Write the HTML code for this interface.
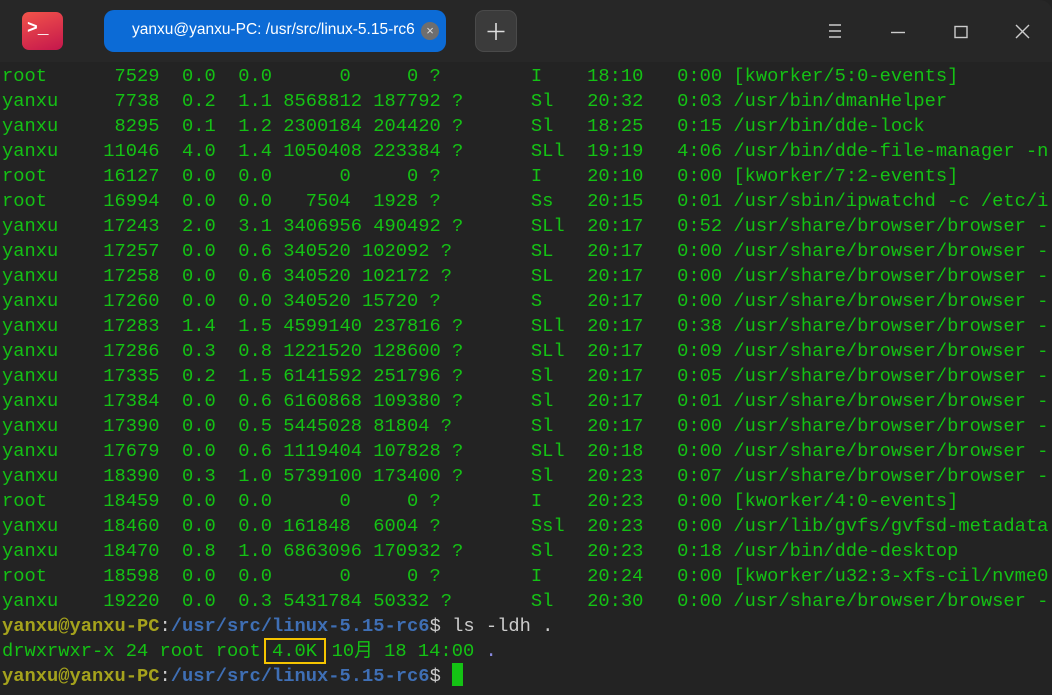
<!DOCTYPE html>
<html><head><meta charset="utf-8"><style>
html,body{margin:0;padding:0;background:#232323;}
body{width:1052px;height:695px;position:relative;overflow:hidden;font-family:"Liberation Mono","Noto Sans CJK SC",monospace;}
#tb{position:absolute;left:0;top:0;width:1052px;height:62px;background:#272727;border-radius:0 12px 0 0;}
#term{position:absolute;left:2px;top:64px;width:1050px;height:631px;font-size:18.75px;color:#14c214;}
.r{position:absolute;left:0;height:25px;line-height:25px;width:1050px;white-space:pre;}
.r span{position:absolute;top:0;white-space:pre;}
.u{color:#a5a31c;font-weight:bold}.p{color:#3f6fb5;font-weight:bold}
</style></head><body>
<div id="tb">
 <div style="position:absolute;left:22px;top:12px;width:41px;height:38px;border-radius:7px;background:linear-gradient(160deg,#f2544a,#c4164c);"></div>
 <div style="position:absolute;left:27px;top:19px;color:#fff;font:bold 18px 'Liberation Mono',monospace;">&gt;_</div>
 <div style="position:absolute;left:104px;top:10px;width:342px;height:42px;border-radius:10px;background:#0c6bd6;"></div>
 <div style="position:absolute;left:132px;top:21px;color:#fff;font:15.5px 'Liberation Sans',sans-serif;">yanxu@yanxu-PC: /usr/src/linux-5.15-rc6</div>
 <div style="position:absolute;left:421px;top:22px;width:18px;height:18px;border-radius:9px;background:#6e6e6e;color:#ddd;font:13px 'Liberation Sans',sans-serif;text-align:center;line-height:18px;">×</div>
 <div style="position:absolute;left:475px;top:10px;width:42px;height:42px;box-sizing:border-box;border:1px solid #4a4a4a;border-radius:9px;background:#3b3b3b;"></div>
 <svg style="position:absolute;left:0;top:0" width="1052" height="62">
  <path d="M496 23v17M487.5 31.5h17" stroke="#ddd" stroke-width="1.6"/>
  <path d="M829 25h12M829 31h12M829 37h12" stroke="#ccc" stroke-width="1.4"/>
  <path d="M891 32.5h14" stroke="#ccc" stroke-width="1.4"/>
  <rect x="955" y="26.5" width="12" height="11" fill="none" stroke="#ccc" stroke-width="1.4"/>
  <path d="M1016 25l13 13M1029 25l-13 13" stroke="#ccc" stroke-width="1.4"/>
 </svg>
</div>
<div id="term">
<div class="r" style="top:0"><span style="left:0ch">root</span><span style="left:10ch">7529</span><span style="left:16ch">0.0</span><span style="left:21ch">0.0</span><span style="left:24ch">      0     0 ?</span><span style="left:47ch">I</span><span style="left:52ch">18:10</span><span style="left:60ch">0:00</span><span style="left:65ch">[kworker/5:0-events]</span></div>
<div class="r" style="top:25px"><span style="left:0ch">yanxu</span><span style="left:10ch">7738</span><span style="left:16ch">0.2</span><span style="left:21ch">1.1</span><span style="left:24ch"> 8568812 187792 ?</span><span style="left:47ch">Sl</span><span style="left:52ch">20:32</span><span style="left:60ch">0:03</span><span style="left:65ch">/usr/bin/dmanHelper</span></div>
<div class="r" style="top:50px"><span style="left:0ch">yanxu</span><span style="left:10ch">8295</span><span style="left:16ch">0.1</span><span style="left:21ch">1.2</span><span style="left:24ch"> 2300184 204420 ?</span><span style="left:47ch">Sl</span><span style="left:52ch">18:25</span><span style="left:60ch">0:15</span><span style="left:65ch">/usr/bin/dde-lock</span></div>
<div class="r" style="top:75px"><span style="left:0ch">yanxu</span><span style="left:9ch">11046</span><span style="left:16ch">4.0</span><span style="left:21ch">1.4</span><span style="left:24ch"> 1050408 223384 ?</span><span style="left:47ch">SLl</span><span style="left:52ch">19:19</span><span style="left:60ch">4:06</span><span style="left:65ch">/usr/bin/dde-file-manager -n</span></div>
<div class="r" style="top:100px"><span style="left:0ch">root</span><span style="left:9ch">16127</span><span style="left:16ch">0.0</span><span style="left:21ch">0.0</span><span style="left:24ch">      0     0 ?</span><span style="left:47ch">I</span><span style="left:52ch">20:10</span><span style="left:60ch">0:00</span><span style="left:65ch">[kworker/7:2-events]</span></div>
<div class="r" style="top:125px"><span style="left:0ch">root</span><span style="left:9ch">16994</span><span style="left:16ch">0.0</span><span style="left:21ch">0.0</span><span style="left:24ch">   7504  1928 ?</span><span style="left:47ch">Ss</span><span style="left:52ch">20:15</span><span style="left:60ch">0:01</span><span style="left:65ch">/usr/sbin/ipwatchd -c /etc/i</span></div>
<div class="r" style="top:150px"><span style="left:0ch">yanxu</span><span style="left:9ch">17243</span><span style="left:16ch">2.0</span><span style="left:21ch">3.1</span><span style="left:24ch"> 3406956 490492 ?</span><span style="left:47ch">SLl</span><span style="left:52ch">20:17</span><span style="left:60ch">0:52</span><span style="left:65ch">/usr/share/browser/browser -</span></div>
<div class="r" style="top:175px"><span style="left:0ch">yanxu</span><span style="left:9ch">17257</span><span style="left:16ch">0.0</span><span style="left:21ch">0.6</span><span style="left:24ch"> 340520 102092 ?</span><span style="left:47ch">SL</span><span style="left:52ch">20:17</span><span style="left:60ch">0:00</span><span style="left:65ch">/usr/share/browser/browser -</span></div>
<div class="r" style="top:200px"><span style="left:0ch">yanxu</span><span style="left:9ch">17258</span><span style="left:16ch">0.0</span><span style="left:21ch">0.6</span><span style="left:24ch"> 340520 102172 ?</span><span style="left:47ch">SL</span><span style="left:52ch">20:17</span><span style="left:60ch">0:00</span><span style="left:65ch">/usr/share/browser/browser -</span></div>
<div class="r" style="top:225px"><span style="left:0ch">yanxu</span><span style="left:9ch">17260</span><span style="left:16ch">0.0</span><span style="left:21ch">0.0</span><span style="left:24ch"> 340520 15720 ?</span><span style="left:47ch">S</span><span style="left:52ch">20:17</span><span style="left:60ch">0:00</span><span style="left:65ch">/usr/share/browser/browser -</span></div>
<div class="r" style="top:250px"><span style="left:0ch">yanxu</span><span style="left:9ch">17283</span><span style="left:16ch">1.4</span><span style="left:21ch">1.5</span><span style="left:24ch"> 4599140 237816 ?</span><span style="left:47ch">SLl</span><span style="left:52ch">20:17</span><span style="left:60ch">0:38</span><span style="left:65ch">/usr/share/browser/browser -</span></div>
<div class="r" style="top:275px"><span style="left:0ch">yanxu</span><span style="left:9ch">17286</span><span style="left:16ch">0.3</span><span style="left:21ch">0.8</span><span style="left:24ch"> 1221520 128600 ?</span><span style="left:47ch">SLl</span><span style="left:52ch">20:17</span><span style="left:60ch">0:09</span><span style="left:65ch">/usr/share/browser/browser -</span></div>
<div class="r" style="top:300px"><span style="left:0ch">yanxu</span><span style="left:9ch">17335</span><span style="left:16ch">0.2</span><span style="left:21ch">1.5</span><span style="left:24ch"> 6141592 251796 ?</span><span style="left:47ch">Sl</span><span style="left:52ch">20:17</span><span style="left:60ch">0:05</span><span style="left:65ch">/usr/share/browser/browser -</span></div>
<div class="r" style="top:325px"><span style="left:0ch">yanxu</span><span style="left:9ch">17384</span><span style="left:16ch">0.0</span><span style="left:21ch">0.6</span><span style="left:24ch"> 6160868 109380 ?</span><span style="left:47ch">Sl</span><span style="left:52ch">20:17</span><span style="left:60ch">0:01</span><span style="left:65ch">/usr/share/browser/browser -</span></div>
<div class="r" style="top:350px"><span style="left:0ch">yanxu</span><span style="left:9ch">17390</span><span style="left:16ch">0.0</span><span style="left:21ch">0.5</span><span style="left:24ch"> 5445028 81804 ?</span><span style="left:47ch">Sl</span><span style="left:52ch">20:17</span><span style="left:60ch">0:00</span><span style="left:65ch">/usr/share/browser/browser -</span></div>
<div class="r" style="top:375px"><span style="left:0ch">yanxu</span><span style="left:9ch">17679</span><span style="left:16ch">0.0</span><span style="left:21ch">0.6</span><span style="left:24ch"> 1119404 107828 ?</span><span style="left:47ch">SLl</span><span style="left:52ch">20:18</span><span style="left:60ch">0:00</span><span style="left:65ch">/usr/share/browser/browser -</span></div>
<div class="r" style="top:400px"><span style="left:0ch">yanxu</span><span style="left:9ch">18390</span><span style="left:16ch">0.3</span><span style="left:21ch">1.0</span><span style="left:24ch"> 5739100 173400 ?</span><span style="left:47ch">Sl</span><span style="left:52ch">20:23</span><span style="left:60ch">0:07</span><span style="left:65ch">/usr/share/browser/browser -</span></div>
<div class="r" style="top:425px"><span style="left:0ch">root</span><span style="left:9ch">18459</span><span style="left:16ch">0.0</span><span style="left:21ch">0.0</span><span style="left:24ch">      0     0 ?</span><span style="left:47ch">I</span><span style="left:52ch">20:23</span><span style="left:60ch">0:00</span><span style="left:65ch">[kworker/4:0-events]</span></div>
<div class="r" style="top:450px"><span style="left:0ch">yanxu</span><span style="left:9ch">18460</span><span style="left:16ch">0.0</span><span style="left:21ch">0.0</span><span style="left:24ch"> 161848  6004 ?</span><span style="left:47ch">Ssl</span><span style="left:52ch">20:23</span><span style="left:60ch">0:00</span><span style="left:65ch">/usr/lib/gvfs/gvfsd-metadata</span></div>
<div class="r" style="top:475px"><span style="left:0ch">yanxu</span><span style="left:9ch">18470</span><span style="left:16ch">0.8</span><span style="left:21ch">1.0</span><span style="left:24ch"> 6863096 170932 ?</span><span style="left:47ch">Sl</span><span style="left:52ch">20:23</span><span style="left:60ch">0:18</span><span style="left:65ch">/usr/bin/dde-desktop</span></div>
<div class="r" style="top:500px"><span style="left:0ch">root</span><span style="left:9ch">18598</span><span style="left:16ch">0.0</span><span style="left:21ch">0.0</span><span style="left:24ch">      0     0 ?</span><span style="left:47ch">I</span><span style="left:52ch">20:24</span><span style="left:60ch">0:00</span><span style="left:65ch">[kworker/u32:3-xfs-cil/nvme0</span></div>
<div class="r" style="top:525px"><span style="left:0ch">yanxu</span><span style="left:9ch">19220</span><span style="left:16ch">0.0</span><span style="left:21ch">0.3</span><span style="left:24ch"> 5431784 50332 ?</span><span style="left:47ch">Sl</span><span style="left:52ch">20:30</span><span style="left:60ch">0:00</span><span style="left:65ch">/usr/share/browser/browser -</span></div>
<div class="r" style="top:550px"><span class="u">yanxu@yanxu-PC</span><span style="left:14ch;color:#ccc">:</span><span class="p" style="left:15ch">/usr/src/linux-5.15-rc6</span><span style="left:38ch;color:#ccc">$ ls -ldh .</span></div>
<div class="r" style="top:575px"><span style="left:0">drwxrwxr-x 24 root root </span><span style="left:24ch">4.0K </span><span style="left:29.3ch">10月 18 14:00 <span style="position:static;color:#8a8ae0">.</span></span></div>
<div class="r" style="top:600px"><span class="u">yanxu@yanxu-PC</span><span style="left:14ch;color:#ccc">:</span><span class="p" style="left:15ch">/usr/src/linux-5.15-rc6</span><span style="left:38ch;color:#ccc">$</span></div>
<div style="position:absolute;left:262px;top:574px;width:58px;height:22px;border:2.5px solid #f5c400;"></div>
<div style="position:absolute;left:450px;top:599px;width:11px;height:23px;background:#14c214;"></div>
</div>
</body></html>
